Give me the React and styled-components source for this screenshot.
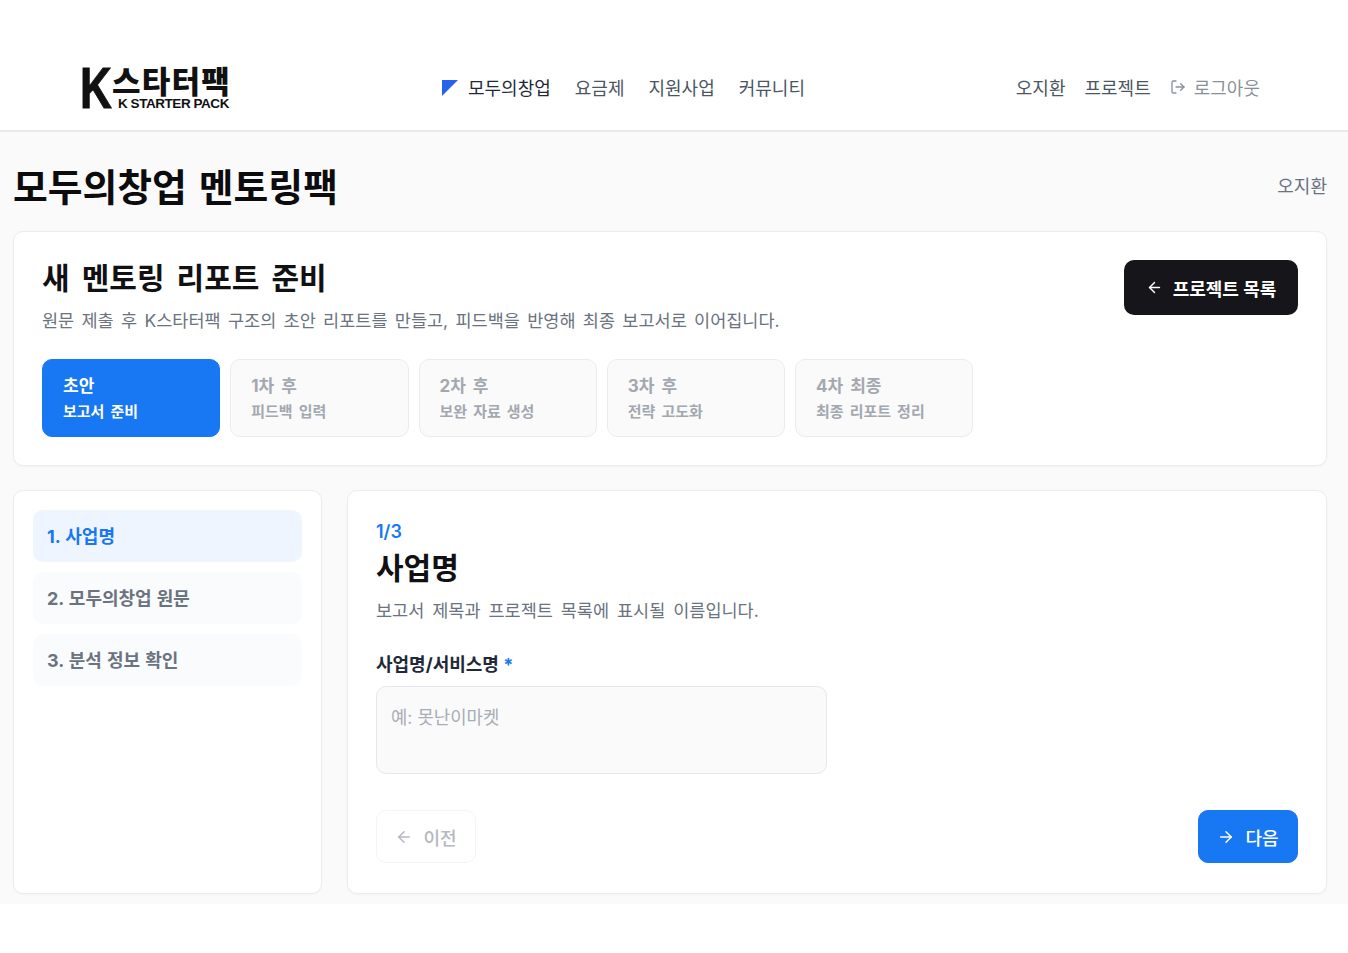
import styled, { createGlobalStyle } from "styled-components"
import { ArrowLeft, ArrowRight, LogOut } from "lucide-react"

const GlobalStyle = createGlobalStyle`
  html, body {
    margin: 0;
    padding: 0;
    background: #fff;
  }
  * {
    box-sizing: border-box;
  }
  body {
    font-family: "Inter", "Noto Sans CJK KR", sans-serif;
    color: #111114;
  }
`

const Header = styled.header`
  height: 132px;
  background: #fff;
  border-bottom: 2px solid #e9eaec;
  padding: 57px 88px 0 81px;
  display: flex;
  align-items: flex-start;
`

const Logo = styled.div`
  width: 150px;
  height: 44px;
  margin-top: 9px;
  display: flex;
  color: #111;
`

const LogoK = styled.span`
  font-family: "Liberation Sans", sans-serif;
  font-size: 58px;
  font-weight: 700;
  line-height: 44px;
  width: 32px;
  margin-left: -1px;
  transform: scaleX(0.76);
  transform-origin: left center;
  -webkit-text-stroke: 1px #111;
`

const LogoText = styled.div`
  display: flex;
  flex-direction: column;
`

const LogoKo = styled.span`
  font-size: 31px;
  font-weight: 900;
  line-height: 31px;
  letter-spacing: 1.2px;
  white-space: nowrap;
`

const LogoEn = styled.span`
  font-family: "Liberation Sans", sans-serif;
  font-size: 13.5px;
  font-weight: 700;
  line-height: 14px;
  letter-spacing: -0.45px;
  margin-left: 6px;
  white-space: nowrap;
`

const Nav = styled.nav`
  margin-left: 210px;
  height: 60px;
  display: flex;
  align-items: center;
  gap: 24px;
  font-size: 18px;
  color: #4b5563;
`

const NavActive = styled.span`
  display: flex;
  align-items: center;
  gap: 10px;
  color: #1f2937;
`

const UserNav = styled.div`
  margin-left: auto;
  height: 60px;
  display: flex;
  align-items: center;
  gap: 19px;
  font-size: 18px;
  color: #4b5563;
`

const Logout = styled.span`
  display: flex;
  align-items: center;
  gap: 8px;
  color: #8a9099;
`

const Main = styled.main`
  height: 772px;
  background: #fafafa;
  padding: 27px 21px 0 13px;
`

const PageHead = styled.div`
  height: 72px;
  display: flex;
  justify-content: space-between;
  align-items: flex-start;
`

const PageTitle = styled.h1`
  margin: 0;
  font-size: 37.8px;
  line-height: 56px;
  font-weight: 700;
  word-spacing: 3px;
  color: #0c0c0f;
`

const PageUser = styled.span`
  font-size: 18px;
  line-height: 55px;
  color: #6b7280;
`

const Card = styled.section`
  background: #fff;
  border: 1px solid #ebecee;
  border-radius: 10px;
  box-shadow: 0 1px 2px rgba(0, 0, 0, 0.03);
`

const Intro = styled(Card)`
  height: 235px;
  padding: 28px 28px;
`

const IntroTop = styled.div`
  display: flex;
  justify-content: space-between;
  align-items: flex-start;
`

const IntroTitle = styled.h2`
  margin: 0;
  font-size: 30px;
  line-height: 36px;
  font-weight: 700;
  word-spacing: 5px;
`

const Muted = styled.p`
  margin: 12px 0 0;
  font-size: 17.5px;
  line-height: 26px;
  word-spacing: 2.4px;
  color: #6b7280;
`

const DarkButton = styled.button`
  width: 174px;
  height: 55px;
  border: 0;
  border-radius: 10px;
  background: #15151a;
  color: #fff;
  font: inherit;
  font-size: 18px;
  font-weight: 700;
  display: flex;
  align-items: center;
  justify-content: center;
  gap: 10px;
`

const Steps = styled.div`
  display: flex;
  gap: 10px;
  margin-top: 25px;
`

const Step = styled.div`
  width: 178.25px;
  height: 78px;
  padding: 14px 20px;
  border-radius: 10px;
  border: 1px solid ${(props) => (props.$active ? "#1877f2" : "#ebecee")};
  background: ${(props) => (props.$active ? "#1877f2" : "#fafafa")};
  color: ${(props) => (props.$active ? "#fff" : "#a3a8b0")};
  font-weight: 700;
`

const StepName = styled.div`
  font-size: 17px;
  line-height: 24px;
  word-spacing: 3px;
`

const StepDesc = styled.div`
  font-size: 15px;
  line-height: 26px;
  margin-top: 1px;
  word-spacing: 2.5px;
`

const Columns = styled.div`
  display: flex;
  gap: 25px;
  margin-top: 24px;
`

const Side = styled(Card)`
  width: 309px;
  height: 404px;
  padding: 19px;
  display: flex;
  flex-direction: column;
  gap: 10px;
`

const SideItem = styled.div`
  height: 52px;
  border-radius: 10px;
  padding: 0 14px 2px;
  display: flex;
  align-items: center;
  font-size: 18px;
  font-weight: 700;
  word-spacing: 0.8px;
  background: ${(props) => (props.$active ? "#eff5ff" : "#fafbfc")};
  color: ${(props) => (props.$active ? "#1877f2" : "#6b7280")};
`

const Content = styled(Card)`
  flex: 1;
  height: 404px;
  padding: 29px 28px 0;
`

const Count = styled.div`
  font-size: 18px;
  line-height: 24px;
  font-weight: 600;
  color: #1877f2;
`

const ContentTitle = styled.h3`
  margin: 1px 0 0;
  font-size: 30px;
  line-height: 46px;
  font-weight: 700;
`

const ContentDesc = styled(Muted)`
  margin: 7px 0 0;
  word-spacing: 3px;
`

const Label = styled.label`
  display: block;
  margin-top: 29px;
  font-size: 18px;
  line-height: 24px;
  font-weight: 700;
  color: #1f2937;
`

const Required = styled.span`
  color: #1877f2;
`

const Field = styled.textarea`
  display: block;
  width: 451px;
  height: 88px;
  margin-top: 9px;
  padding: 18px 14px;
  resize: none;
  border: 1px solid #e5e7eb;
  border-radius: 10px;
  background: #fafafa;
  font: inherit;
  font-size: 17.8px;
  line-height: 26px;
  &::placeholder {
    color: #a8adb5;
  }
`

const Actions = styled.div`
  display: flex;
  justify-content: space-between;
  margin-top: 36px;
`

const PrevButton = styled.button`
  width: 100px;
  height: 53px;
  border: 1px solid #f3f4f6;
  border-radius: 10px;
  background: #fff;
  color: #b4b8bf;
  font: inherit;
  font-size: 18px;
  font-weight: 500;
  display: flex;
  align-items: center;
  justify-content: center;
  gap: 10px;
`

const NextButton = styled(PrevButton)`
  border-color: #1877f2;
  background: #1877f2;
  color: #fff;
`

const steps = [
  ["초안", "보고서 준비"],
  ["1차 후", "피드백 입력"],
  ["2차 후", "보완 자료 생성"],
  ["3차 후", "전략 고도화"],
  ["4차 최종", "최종 리포트 정리"],
]

const sideItems = ["1. 사업명", "2. 모두의창업 원문", "3. 분석 정보 확인"]

export default function App() {
  return (
    <>
      <GlobalStyle />
      <Header>
        <Logo>
          <LogoK>K</LogoK>
          <LogoText>
            <LogoKo>스타터팩</LogoKo>
            <LogoEn>K STARTER PACK</LogoEn>
          </LogoText>
        </Logo>
        <Nav>
          <NavActive>
            <svg width="17" height="17" viewBox="0 0 17 17">
              <path d="M1 1h16L1 17z" fill="#2563eb" />
            </svg>
            모두의창업
          </NavActive>
          <span>요금제</span>
          <span>지원사업</span>
          <span>커뮤니티</span>
        </Nav>
        <UserNav>
          <span>오지환</span>
          <span>프로젝트</span>
          <Logout>
            <LogOut size={16} />
            로그아웃
          </Logout>
        </UserNav>
      </Header>
      <Main>
        <PageHead>
          <PageTitle>모두의창업 멘토링팩</PageTitle>
          <PageUser>오지환</PageUser>
        </PageHead>
        <Intro>
          <IntroTop>
            <div>
              <IntroTitle>새 멘토링 리포트 준비</IntroTitle>
              <Muted>원문 제출 후 K스타터팩 구조의 초안 리포트를 만들고, 피드백을 반영해 최종 보고서로 이어집니다.</Muted>
            </div>
            <DarkButton>
              <ArrowLeft size={17} />
              프로젝트 목록
            </DarkButton>
          </IntroTop>
          <Steps>
            {steps.map(([name, desc], i) => (
              <Step key={name} $active={i === 0}>
                <StepName>{name}</StepName>
                <StepDesc>{desc}</StepDesc>
              </Step>
            ))}
          </Steps>
        </Intro>
        <Columns>
          <Side>
            {sideItems.map((item, i) => (
              <SideItem key={item} $active={i === 0}>
                {item}
              </SideItem>
            ))}
          </Side>
          <Content>
            <Count>1/3</Count>
            <ContentTitle>사업명</ContentTitle>
            <ContentDesc>보고서 제목과 프로젝트 목록에 표시될 이름입니다.</ContentDesc>
            <Label>
              사업명/서비스명 <Required>*</Required>
            </Label>
            <Field placeholder="예: 못난이마켓" />
            <Actions>
              <PrevButton>
                <ArrowLeft size={18} />
                이전
              </PrevButton>
              <NextButton>
                <ArrowRight size={18} />
                다음
              </NextButton>
            </Actions>
          </Content>
        </Columns>
      </Main>
    </>
  )
}
